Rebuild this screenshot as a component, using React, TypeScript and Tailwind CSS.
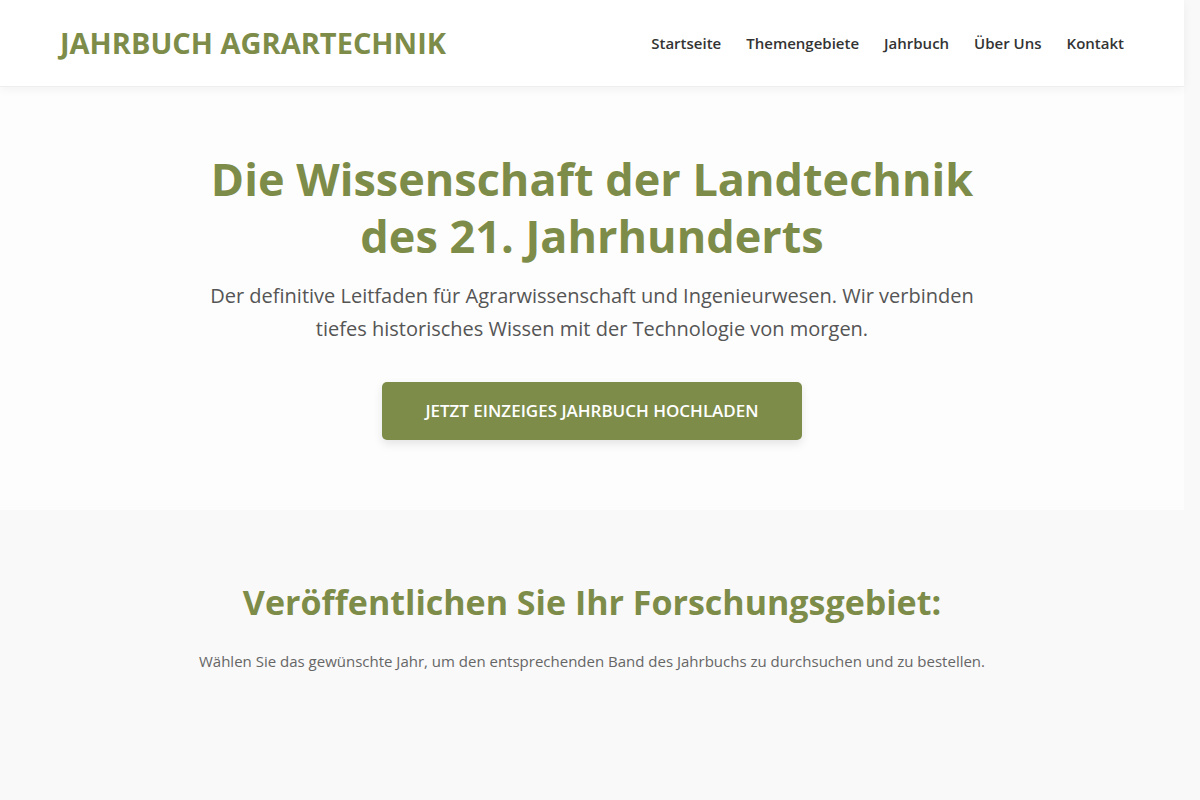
const navItems = [
  { label: "Startseite", href: "#startseite" },
  { label: "Themengebiete", href: "#themengebiete" },
  { label: "Jahrbuch", href: "#jahrbuch" },
  { label: "Über Uns", href: "#ueber-uns" },
  { label: "Kontakt", href: "#kontakt" },
];

function Header() {
  return (
    <header className="border-b border-[#eeeeee] bg-white shadow-[0_2px_10px_rgba(0,0,0,0.05)] relative z-10">
      <div className="flex items-center justify-between px-[60px] py-5">
        <a href="#startseite" className="text-[29px] leading-[46px] font-bold text-[#7d8c48]">
          JAHRBUCH AGRARTECHNIK
        </a>
        <nav>
          <ul className="flex gap-[25px]">
            {navItems.map((item) => (
              <li key={item.href}>
                <a href={item.href} className="text-[15px] font-semibold text-[#333333]">
                  {item.label}
                </a>
              </li>
            ))}
          </ul>
        </nav>
      </div>
    </header>
  );
}

function Hero() {
  return (
    <section id="startseite" className="bg-[#fdfdfd] px-5 pt-[63px] pb-[70px] text-center">
      <div className="mx-auto max-w-[800px]">
        <h1 className="text-[45px] leading-[57px] font-bold text-[#7d8c48]">
          Die Wissenschaft der Landtechnik
          <br />
          des 21. Jahrhunderts
        </h1>
        <p className="mt-[15px] text-[20px] leading-[33px] text-[#555555]">
          Der definitive Leitfaden für Agrarwissenschaft und Ingenieurwesen. Wir verbinden
          <br />
          tiefes historisches Wissen mit der Technologie von morgen.
        </p>
        <button
          type="button"
          className="mt-[37px] h-[58px] rounded-[5px] bg-[#7d8c48] px-[43px] text-[17px] font-semibold text-white shadow-[0_4px_10px_rgba(0,0,0,0.1)]"
        >
          JETZT EINZEIGES JAHRBUCH HOCHLADEN
        </button>
      </div>
    </section>
  );
}

function Research() {
  return (
    <section id="jahrbuch" className="px-5 pt-[70px] pb-20 text-center">
      <h2 className="text-[34px] leading-[45px] font-bold text-[#7d8c48]">
        Veröffentlichen Sie Ihr Forschungsgebiet:
      </h2>
      <p className="mt-6 text-[15px] leading-6 text-[#666666]">
        Wählen Sie das gewünschte Jahr, um den entsprechenden Band des Jahrbuchs zu durchsuchen und zu bestellen.
      </p>
    </section>
  );
}

export default function App() {
  return (
    <div className="min-h-screen bg-[#f9f9f9] pr-4 font-['Segoe_UI','Open_Sans','Noto_Sans',sans-serif]">
      <Header />
      <main>
        <Hero />
        <Research />
      </main>
    </div>
  );
}
